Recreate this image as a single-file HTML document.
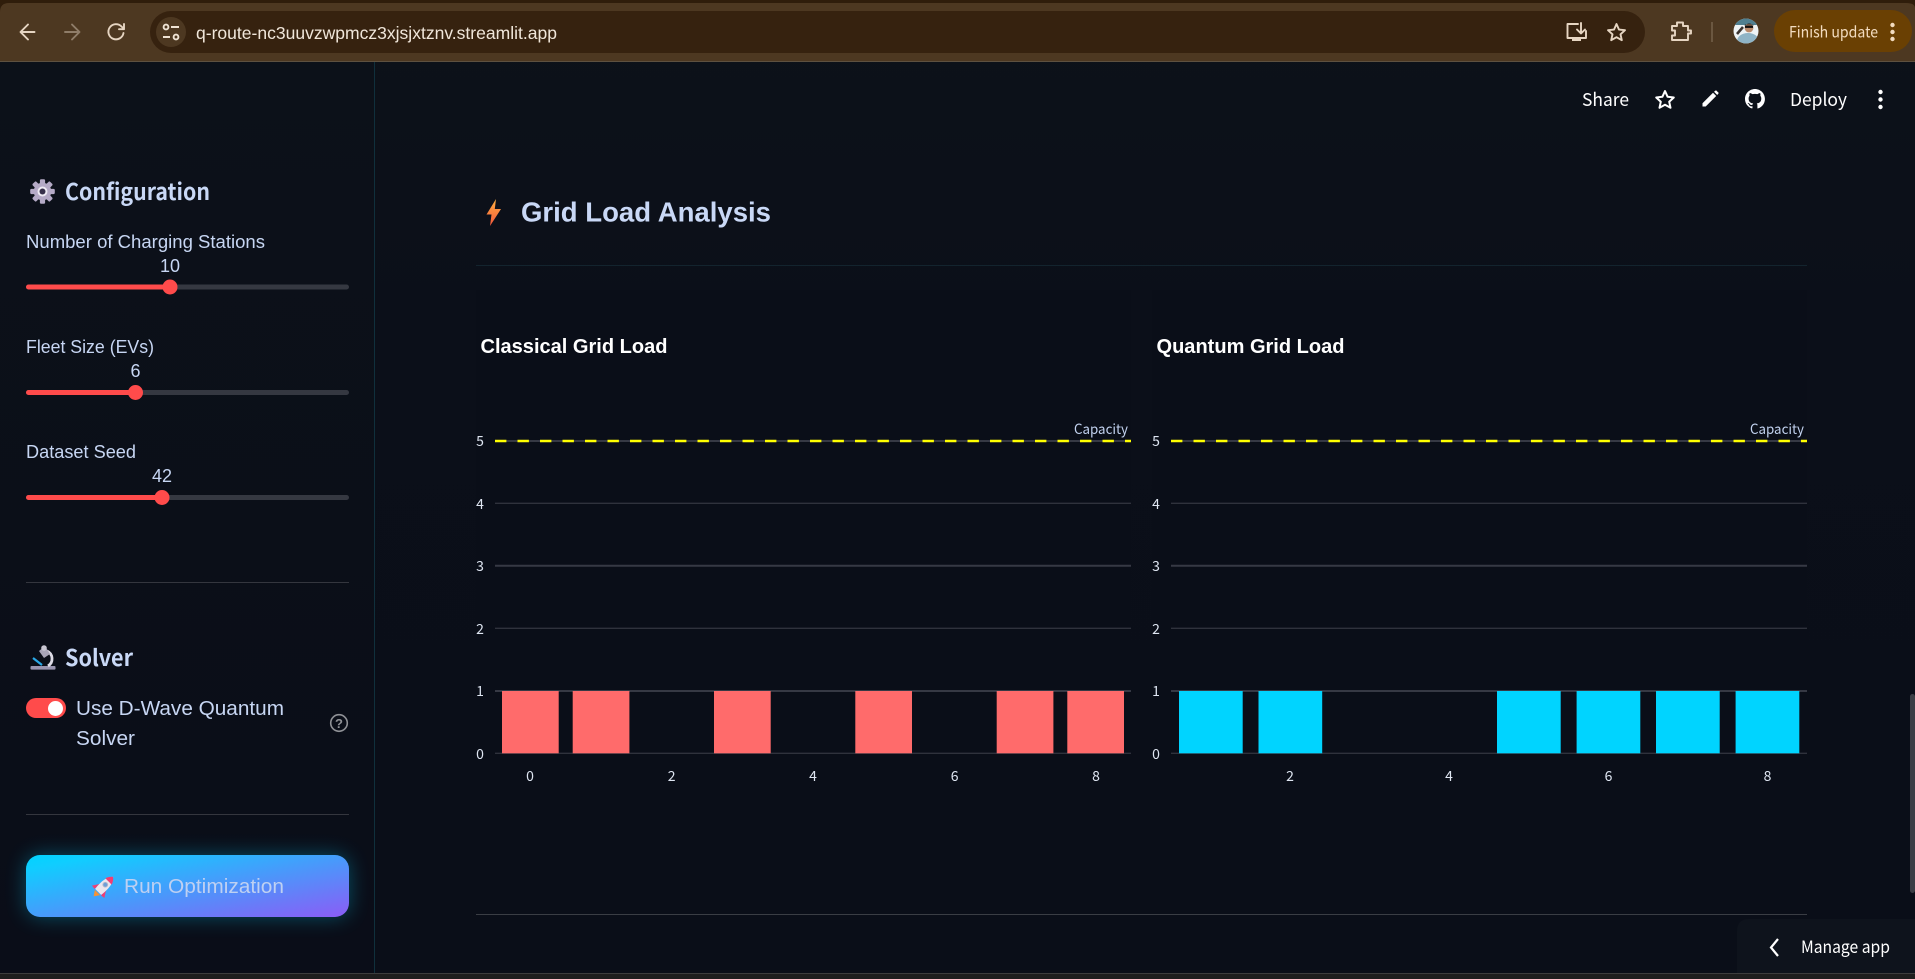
<!DOCTYPE html>
<html lang="en"><head><meta charset="utf-8"><title>Grid Load Analysis</title>
<style>
html,body{margin:0;padding:0;background:#0c111a;width:1915px;height:979px;overflow:hidden}
svg{display:block}
.i{font-family:"Liberation Sans",sans-serif}
.n{font-family:"Noto Sans CJK JP","Liberation Sans",sans-serif}
.lbl{fill:#c7d6f3;font-size:18px}
.val{fill:#c7d6f3;font-size:18px;text-anchor:middle}
.h{fill:#c9d8f6;font-weight:700}
.t{fill:#dfe6f2;font-size:14px;text-anchor:middle}
.g{stroke:#2f323c;stroke-width:1.3}
.gb{stroke:#363944;stroke-width:2}
</style></head><body>
<svg width="1915" height="979" viewBox="0 0 1915 979" xmlns="http://www.w3.org/2000/svg">
<defs>
<linearGradient id="main" x1="0" y1="0" x2="0" y2="1"><stop offset="0" stop-color="#0d1219"/><stop offset=".32" stop-color="#0b0f19"/><stop offset="1" stop-color="#0a0e18"/></linearGradient>
<linearGradient id="side" x1="0" y1="0" x2="0" y2="1"><stop offset="0" stop-color="#0c1119"/><stop offset="1" stop-color="#0a0d18"/></linearGradient>
<linearGradient id="btn" x1="0" y1="0" x2="1" y2="1" gradientUnits="objectBoundingBox"><stop offset="0" stop-color="#00d4ff"/><stop offset=".12" stop-color="#10cdff"/><stop offset="1" stop-color="#8b5cf6"/></linearGradient>
<linearGradient id="bolt" x1="0" y1="0" x2="0" y2="1"><stop offset="0" stop-color="#ffb040"/><stop offset="1" stop-color="#f4573c"/></linearGradient>
<filter id="glow" x="-20%" y="-60%" width="140%" height="220%"><feGaussianBlur stdDeviation="10"/></filter>
<clipPath id="av"><circle cx="1746" cy="31" r="12.5"/></clipPath>
</defs>

<!-- page -->
<rect width="1915" height="979" fill="url(#main)"/>
<rect x="0" y="62" width="374" height="911" fill="url(#side)"/>
<rect x="374" y="62" width="1" height="911" fill="#10303c"/>

<!-- browser chrome -->
<rect width="1915" height="62" fill="#2f1d0b"/>
<path d="M0 12Q0 3 9 3H1906Q1915 3 1915 8V62H0Z" fill="#4d3821"/>
<rect x="0" y="61" width="1915" height="1" fill="#5e5140"/>
<rect x="150" y="11" width="1495" height="42" rx="21" fill="#36220f"/>
<g fill="none" stroke="#e6d5c2" stroke-width="1.9" stroke-linecap="round" stroke-linejoin="round">
<path d="M34.5 32H21M28 24.5L20.5 32L28 39.5"/>
<path d="M65 32H79M72 24.5L79.5 32L72 39.5" stroke="#8f7d69"/>
<path d="M123.5 33A7.6 7.6 0 1 1 121.5 26.5L124 29M124 24V29.2H119"/>
</g>
<circle cx="171" cy="32" r="15" fill="#4d3821"/>
<g fill="none" stroke="#efe3d4" stroke-width="1.9"><circle cx="166" cy="27" r="2.4"/><path d="M171 27H179M163 37H170"/><circle cx="176" cy="37" r="2.4"/></g>
<text class="i" x="196" y="39" font-size="17.5" fill="#f0e6da" textLength="361" lengthAdjust="spacingAndGlyphs">q-route-nc3uuvzwpmcz3xjsjxtznv.streamlit.app</text>
<g fill="none" stroke="#e6d5c2" stroke-width="1.9" stroke-linejoin="round" stroke-linecap="round">
<path d="M1578 24H1567.5V38H1586V31"/><path d="M1581 23V33M1577 29.5L1581 33.5L1585 29.5"/>
<path d="M1616.5 24L1619 29.6L1625 30.2L1620.5 34.3L1621.8 40.2L1616.5 37.2L1611.2 40.2L1612.5 34.3L1608 30.2L1614 29.6Z"/>
<path d="M1672 26H1677V22.5H1683V26H1688V30.5H1691V33.5H1688V40H1672V35.5H1675V30.5H1672Z"/>
</g>
<rect x="1572" y="39" width="9" height="2" fill="#e6d5c2"/>
<rect x="1711" y="22" width="2" height="20" fill="#6b5740"/>
<g clip-path="url(#av)">
<rect x="1733" y="18" width="26" height="26" fill="#eef3f5"/>
<rect x="1733" y="18" width="26" height="7" fill="#4f7f90"/>
<ellipse cx="1748" cy="41" rx="11" ry="8" fill="#8fb4c6"/>
<circle cx="1749" cy="28" r="4.4" fill="#b98a6c"/>
<path d="M1744.5 26Q1749 21 1754 26L1753 24.5H1745Z" fill="#1c1a1a"/><rect x="1745" y="25.5" width="8" height="2.4" fill="#111"/>
<path d="M1737 34L1743 27" stroke="#3a3431" stroke-width="2.6"/>
</g>
<rect x="1774" y="10" width="138" height="42" rx="21" fill="#6a4003"/>
<text class="n" x="1789" y="37.5" font-size="15.5" fill="#f3dcc0" textLength="89" lengthAdjust="spacingAndGlyphs">Finish update</text>
<g fill="#f3dcc0"><circle cx="1892.5" cy="25" r="2.2"/><circle cx="1892.5" cy="32" r="2.2"/><circle cx="1892.5" cy="39" r="2.2"/></g>

<!-- top-right app toolbar -->
<g fill="#fff">
<text class="n" x="1582" y="106" font-size="18" textLength="47" lengthAdjust="spacingAndGlyphs">Share</text>
<text class="n" x="1790" y="106" font-size="18" textLength="57" lengthAdjust="spacingAndGlyphs">Deploy</text>
<path d="M1702.5 106.5V103.3L1713 92.8L1716.2 96L1705.7 106.5ZM1714 91.8L1716 90.2L1718.8 93L1717.2 95Z"/>
<circle cx="1880.5" cy="92" r="2.2"/><circle cx="1880.5" cy="99.5" r="2.2"/><circle cx="1880.5" cy="107" r="2.2"/>
</g>
<path d="M1665 91L1667.6 96.8L1673.8 97.5L1669.2 101.7L1670.5 107.8L1665 104.7L1659.5 107.8L1660.8 101.7L1656.2 97.5L1662.4 96.8Z" fill="none" stroke="#fff" stroke-width="2" stroke-linejoin="round"/>
<path transform="translate(1745,89) scale(.83)" fill="#fff" d="M12 0C5.37 0 0 5.37 0 12c0 5.3 3.44 9.8 8.2 11.39.6.11.82-.26.82-.58v-2.03c-3.34.73-4.04-1.61-4.04-1.61-.55-1.39-1.34-1.76-1.34-1.76-1.09-.75.08-.73.08-.73 1.2.08 1.84 1.24 1.84 1.24 1.07 1.83 2.81 1.3 3.49 1 .11-.78.42-1.3.76-1.6-2.67-.3-5.47-1.33-5.47-5.93 0-1.31.47-2.38 1.24-3.22-.14-.3-.54-1.52.1-3.18 0 0 1-.32 3.3 1.23a11.5 11.5 0 0 1 6 0c2.28-1.55 3.29-1.23 3.29-1.23.64 1.66.24 2.88.12 3.18.77.84 1.23 1.91 1.23 3.22 0 4.61-2.8 5.62-5.48 5.92.43.37.81 1.1.81 2.22v3.29c0 .32.22.7.83.58C20.57 21.8 24 17.3 24 12c0-6.63-5.37-12-12-12z"/>

<!-- sidebar -->
<g transform="translate(42.5,191.5)">
<g fill="#b5aac6"><circle r="8.8"/><g id="teeth"><rect x="-2.6" y="-12.3" width="5.2" height="5" rx="1.2"/><rect x="-2.6" y="7.3" width="5.2" height="5" rx="1.2"/><rect x="-12.3" y="-2.6" width="5" height="5.2" rx="1.2"/><rect x="7.3" y="-2.6" width="5" height="5.2" rx="1.2"/></g><use href="#teeth" transform="rotate(45)"/></g>
<circle r="5" fill="#eeeaf3"/><circle r="3" fill="#37304a"/>
</g>
<text class="n h" x="65" y="200" font-size="23" textLength="145" lengthAdjust="spacingAndGlyphs">Configuration</text>

<text class="i lbl" x="26" y="248" textLength="239" lengthAdjust="spacingAndGlyphs">Number of Charging Stations</text>
<text class="i val" x="170" y="272">10</text>
<rect x="26" y="284.5" width="323" height="5" rx="2.5" fill="#353841"/>
<rect x="26" y="284.5" width="144" height="5" rx="2.5" fill="#ff4b4b"/><circle cx="170" cy="287" r="7.5" fill="#ff4b4b"/>

<text class="i lbl" x="26" y="353" textLength="128" lengthAdjust="spacingAndGlyphs">Fleet Size (EVs)</text>
<text class="i val" x="135.5" y="377">6</text>
<rect x="26" y="390" width="323" height="5" rx="2.5" fill="#353841"/>
<rect x="26" y="390" width="110" height="5" rx="2.5" fill="#ff4b4b"/><circle cx="135.5" cy="392.5" r="7.5" fill="#ff4b4b"/>

<text class="i lbl" x="26" y="458" textLength="110" lengthAdjust="spacingAndGlyphs">Dataset Seed</text>
<text class="i val" x="162" y="482">42</text>
<rect x="26" y="495" width="323" height="5" rx="2.5" fill="#353841"/>
<rect x="26" y="495" width="136" height="5" rx="2.5" fill="#ff4b4b"/><circle cx="162" cy="497.5" r="7.5" fill="#ff4b4b"/>

<rect x="26" y="582" width="323" height="1" fill="#34363e"/>

<!-- microscope -->
<g>
<rect x="30.5" y="666" width="25" height="3.6" rx="1" fill="#9a95b0"/>
<path d="M47 651A8.5 8.5 0 0 1 48 666" fill="none" stroke="#dedbe6" stroke-width="2.8"/>
<path d="M39 651L45 646L50 654L44 658Z" fill="#a9a5b8"/><circle cx="44" cy="648" r="2.8" fill="#c8c6d2"/>
<path d="M33 658L42 665" stroke="#2aa7e6" stroke-width="2.2"/>
</g>
<text class="n h" x="65" y="666" font-size="23" textLength="68" lengthAdjust="spacingAndGlyphs">Solver</text>

<rect x="26" y="698" width="40" height="20" rx="10" fill="#ff4b4b"/><circle cx="55.5" cy="708.5" r="7.5" fill="#fff"/>
<text class="i" x="76" y="715" font-size="20" fill="#c7d6f3" textLength="208" lengthAdjust="spacingAndGlyphs">Use D-Wave Quantum</text>
<text class="i" x="76" y="745" font-size="20" fill="#c7d6f3" textLength="59" lengthAdjust="spacingAndGlyphs">Solver</text>
<circle cx="339" cy="723" r="8.3" fill="none" stroke="#8f9196" stroke-width="1.6"/>
<text class="i" x="339" y="728" font-size="13" font-weight="700" fill="#8f9196" text-anchor="middle">?</text>

<rect x="26" y="814" width="323" height="1" fill="#34363e"/>

<rect x="26" y="855" width="323" height="62" rx="14" fill="#00d4ff" opacity=".33" filter="url(#glow)"/>
<rect x="26" y="855" width="323" height="62" rx="14" fill="url(#btn)"/>
<!-- rocket -->
<g transform="translate(104,886) rotate(45) scale(.92)">
<path d="M-5 2L-9.5 9L-5 9.5ZM5 2L9.5 9L5 9.5Z" fill="#f23d73"/>
<path d="M0 -14C5 -9 6 -2 4.6 9H-4.6C-6 -2 -5 -9 0 -14Z" fill="#ece6ee"/>
<path d="M0 -14C2.5 -12 4 -9.5 4.8 -7H-4.8C-4 -9.5 -2.5 -12 0 -14Z" fill="#f23d73"/>
<circle cy="-2" r="2.6" fill="#6e9fd8" stroke="#b9bccb"/>
<path d="M-4 10L0 16L4 10Z" fill="#f49335"/>
</g>
<text class="i" x="124" y="893" font-size="20" fill="#bed0f2" textLength="160" lengthAdjust="spacingAndGlyphs">Run Optimization</text>

<!-- main heading -->
<path d="M496 199L486.5 214.5H491.5L490 226L501 209H494.8Z" fill="url(#bolt)"/>
<text class="i h" x="521" y="221.5" font-size="28" textLength="250" lengthAdjust="spacingAndGlyphs">Grid Load Analysis</text>
<rect x="476" y="265" width="1331" height="1" fill="#13242e"/>

<!-- chart panels -->
<rect x="476" y="290" width="655" height="563" fill="#0a0e18"/>
<rect x="1152" y="290" width="655" height="563" fill="#0a0e18"/>

<text class="i" x="480.5" y="353" font-size="20" font-weight="700" fill="#fff" textLength="187" lengthAdjust="spacingAndGlyphs">Classical Grid Load</text>
<text class="i" x="1156.5" y="353" font-size="20" font-weight="700" fill="#fff" textLength="188" lengthAdjust="spacingAndGlyphs">Quantum Grid Load</text>

<!-- left chart -->
<g>
<line class="gb" x1="495" x2="1131" y1="441" y2="441"/>
<line class="g" x1="495" x2="1131" y1="503.3" y2="503.3"/>
<line class="gb" x1="495" x2="1131" y1="565.7" y2="565.7"/>
<line class="g" x1="495" x2="1131" y1="628.3" y2="628.3"/>
<line class="gb" x1="495" x2="1131" y1="691" y2="691"/>
<line class="g" x1="495" x2="1131" y1="753.3" y2="753.3"/>
<line x1="495" x2="1131" y1="441" y2="441" stroke="#ffff00" stroke-width="2.6" stroke-dasharray="11.4 11.1"/>
<g fill="#ff6b6b">
<rect x="502" y="691" width="56.7" height="62.3"/><rect x="572.7" y="691" width="56.7" height="62.3"/>
<rect x="714" y="691" width="56.7" height="62.3"/><rect x="855.3" y="691" width="56.7" height="62.3"/>
<rect x="996.7" y="691" width="56.7" height="62.3"/><rect x="1067.3" y="691" width="56.7" height="62.3"/>
</g>
<g class="n t">
<text x="480" y="446">5</text><text x="480" y="509">4</text><text x="480" y="571">3</text><text x="480" y="634">2</text><text x="480" y="696">1</text><text x="480" y="759">0</text>
<text x="530" y="781">0</text><text x="671.7" y="781">2</text><text x="813" y="781">4</text><text x="954.6" y="781">6</text><text x="1096" y="781">8</text>
</g>
<text class="n" x="1074" y="434" font-size="14" fill="#c2d2ef" textLength="54" lengthAdjust="spacingAndGlyphs">Capacity</text>
</g>

<!-- right chart -->
<g>
<line class="gb" x1="1171" x2="1807" y1="441" y2="441"/>
<line class="g" x1="1171" x2="1807" y1="503.3" y2="503.3"/>
<line class="gb" x1="1171" x2="1807" y1="565.7" y2="565.7"/>
<line class="g" x1="1171" x2="1807" y1="628.3" y2="628.3"/>
<line class="gb" x1="1171" x2="1807" y1="691" y2="691"/>
<line class="g" x1="1171" x2="1807" y1="753.3" y2="753.3"/>
<line x1="1171" x2="1807" y1="441" y2="441" stroke="#ffff00" stroke-width="2.6" stroke-dasharray="11.4 11.1"/>
<g fill="#00d4ff">
<rect x="1179" y="691" width="63.7" height="62.3"/><rect x="1258.5" y="691" width="63.7" height="62.3"/>
<rect x="1497" y="691" width="63.7" height="62.3"/><rect x="1576.6" y="691" width="63.7" height="62.3"/>
<rect x="1656" y="691" width="63.7" height="62.3"/><rect x="1735.6" y="691" width="63.7" height="62.3"/>
</g>
<g class="n t">
<text x="1156" y="446">5</text><text x="1156" y="509">4</text><text x="1156" y="571">3</text><text x="1156" y="634">2</text><text x="1156" y="696">1</text><text x="1156" y="759">0</text>
<text x="1290" y="781">2</text><text x="1449" y="781">4</text><text x="1608.5" y="781">6</text><text x="1767.5" y="781">8</text>
</g>
<text class="n" x="1750" y="434" font-size="14" fill="#c2d2ef" textLength="54" lengthAdjust="spacingAndGlyphs">Capacity</text>
</g>

<rect x="476" y="914" width="1331" height="1" fill="#3a3d44"/>

<!-- manage app -->
<path d="M1737 973V931Q1737 919 1749 919H1915V973Z" fill="#0e131c"/>
<path d="M1778 939L1771 947.5L1778 956" fill="none" stroke="#fff" stroke-width="2.2"/>
<text class="n" x="1801" y="953" font-size="17" fill="#fff" textLength="89" lengthAdjust="spacingAndGlyphs">Manage app</text>
<rect x="1910" y="694" width="5" height="199" rx="2.5" fill="#3b3e45"/>

<!-- bottom edge -->
<rect x="0" y="973" width="1915" height="6" fill="#1e1e1e"/>
<rect x="0" y="973" width="1915" height="1" fill="#3d3d3d"/>
</svg>
</body></html>
